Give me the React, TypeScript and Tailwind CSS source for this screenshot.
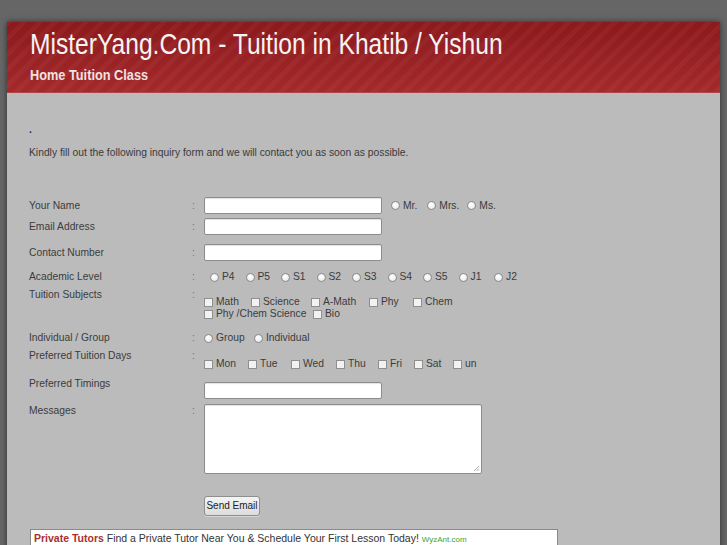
import React from "react";

const radio = "inline-block w-[9px] h-[9px] rounded-full border border-[#8a8a8a] bg-[radial-gradient(circle_at_40%_35%,#ffffff,#e6e6e6)] shrink-0";
const box = "inline-block w-[9px] h-[9px] border border-[#8f8f8f] bg-[#f2f2f2] shrink-0";
const input = "block h-[17px] w-[178px] bg-white border border-[#8c8c8c] rounded-[2px] shadow-[inset_0_1px_1px_rgba(0,0,0,0.12)]";

function Radio({ label, className = "" }: { label: string; className?: string }) {
  return (
    <span className={"flex items-center " + className}>
      <span className={radio} />
      <span className="ml-[3px]">{label}</span>
    </span>
  );
}

function Check({ label, className = "" }: { label: string; className?: string }) {
  return (
    <span className={"flex items-center " + className}>
      <span className={box} />
      <span className="ml-[3px]">{label}</span>
    </span>
  );
}

function Row({
  label,
  colon = true,
  className = "",
  labelClass = "items-center",
  children,
}: {
  label: string;
  colon?: boolean;
  className?: string;
  labelClass?: string;
  children?: React.ReactNode;
}) {
  return (
    <div className={"flex " + className}>
      <div className={"w-[163px] flex " + labelClass}>{label}</div>
      <div className={"w-[12px] flex text-[#777] " + labelClass}>{colon ? ":" : ""}</div>
      <div className="flex-1">{children}</div>
    </div>
  );
}

const levels = ["P4", "P5", "S1", "S2", "S3", "S4", "S5", "J1", "J2"];
const days: [string, string][] = [
  ["Mon", "w-[44px]"],
  ["Tue", "w-[43px]"],
  ["Wed", "w-[45px]"],
  ["Thu", "w-[42px]"],
  ["Fri", "w-[36px]"],
  ["Sat", "w-[39px]"],
  ["un", "w-[30px]"],
];

export default function App() {
  return (
    <div className="min-h-screen bg-[#666666] pt-[22px] pl-[7px] overflow-hidden">
      <div className="w-[713px] shadow-[0_0_6px_rgba(0,0,0,0.55)]">
        <header className="h-[71px] pl-[23px] pt-[4px] bg-[image:repeating-linear-gradient(-45deg,rgba(255,255,255,0.035)_0px,rgba(255,255,255,0.035)_5px,transparent_5px,transparent_11px),linear-gradient(180deg,#8c191c,#a4292b)] border-b border-[#b04446]">
          <h1 className="inline-block origin-left scale-x-[0.82] whitespace-nowrap font-['Liberation_Sans',Arial,sans-serif] text-[30px] leading-[36px] text-[#f7f3f3]">
            MisterYang.Com - Tuition in Khatib / Yishun
          </h1>
          <div className="mt-[4px] w-fit origin-left scale-x-[0.85] whitespace-nowrap font-['Liberation_Sans',Arial,sans-serif] font-bold text-[15px] leading-[18px] text-[#f1e1e1]">
            Home Tuition Class
          </div>
        </header>

        <main className="bg-[#bbbbbb] pl-[22px] pb-[20px] font-['Liberation_Sans',Arial,sans-serif] text-[10.3px] leading-[12px] text-[#3c3c3c]">
          <div className="pt-[31px] h-[43px] text-[#1b2a6a] font-bold">.</div>
          <p className="mt-[11px] text-[#3a3a3a]">
            Kindly fill out the following inquiry form and we will contact you as soon as possible.
          </p>

          <form className="mt-[38px]">
            <Row label="Your Name" className="h-[17px]">
              <div className="flex items-center">
                <span className={input} />
                <Radio label="Mr." className="ml-[9px]" />
                <Radio label="Mrs." className="ml-[10px]" />
                <Radio label="Ms." className="ml-[8px]" />
              </div>
            </Row>
            <Row label="Email Address" className="mt-[4px] h-[17px]">
              <span className={input} />
            </Row>
            <Row label="Contact Number" className="mt-[9px] h-[17px]">
              <span className={input} />
            </Row>
            <Row label="Academic Level" className="mt-[9px] h-[14px]">
              <div className="flex items-center h-full pl-[6px]">
                {levels.map((l) => (
                  <Radio key={l} label={l} className="w-[35.5px]" />
                ))}
              </div>
            </Row>
            <Row label="Tuition Subjects" labelClass="items-start" className="mt-[5px] h-[31px]">
              <div className="pt-[7px]">
                <div className="flex h-[12px] items-center">
                  <Check label="Math" className="w-[47px]" />
                  <Check label="Science" className="w-[60px]" />
                  <Check label="A-Math" className="w-[58px]" />
                  <Check label="Phy" className="w-[44px]" />
                  <Check label="Chem" />
                </div>
                <div className="flex h-[12px] items-center">
                  <Check label="Phy /Chem Science" className="w-[109px]" />
                  <Check label="Bio" />
                </div>
              </div>
            </Row>
            <Row label="Individual / Group" className="mt-[12px] h-[12px]">
              <div className="flex items-center h-full">
                <Radio label="Group" className="w-[50px]" />
                <Radio label="Individual" />
              </div>
            </Row>
            <Row label="Preferred Tuition Days" labelClass="items-start" className="mt-[6px] h-[20px]">
              <div className="pt-[8px] flex h-[20px] items-center">
                {days.map(([d, w]) => (
                  <Check key={d} label={d} className={w} />
                ))}
              </div>
            </Row>
            <Row label="Preferred Timings" colon={false} labelClass="items-start" className="mt-[8px] h-[22px]">
              <div className="pt-[4px]">
                <span className={input} />
              </div>
            </Row>
            <Row label="Messages" labelClass="items-start pt-[1px]" className="mt-[4px] h-[70px]">
              <div className="relative h-[70px] w-[278px] bg-white border border-[#8c8c8c] rounded-[2px] shadow-[inset_0_1px_1px_rgba(0,0,0,0.12)]">
                <svg className="absolute right-[1px] bottom-[1px]" width="7" height="7" viewBox="0 0 7 7">
                  <path d="M6 1L1 6M6 3.5L3.5 6M6 5.5L5.5 6" stroke="#9a9a9a" strokeWidth="0.8" />
                </svg>
              </div>
            </Row>
            <div className="mt-[22px] pl-[175px]">
              <button
                type="button"
                className="h-[20px] w-[56px] rounded-[3px] border border-[#8e8e8e] bg-[linear-gradient(180deg,#f4f4f4,#dcdcdc)] text-[10px] text-[#222] font-['Liberation_Sans',Arial,sans-serif] shadow-[0_1px_0_rgba(255,255,255,0.4)]"
              >
                Send Email
              </button>
            </div>
          </form>

          <div className="mt-[13px] ml-[1px] w-[528px] h-[40px] bg-white border border-[#8a8a8a] px-[3px] pt-[1px] text-[10.5px] leading-[14px] text-[#333]">
            <span className="font-bold text-[#a8312f]">Private Tutors</span> Find a Private Tutor Near You &amp; Schedule Your First Lesson Today!{" "}
            <span className="text-[8px] text-[#3aa13a]">WyzAnt.com</span>
          </div>
        </main>
      </div>
    </div>
  );
}
